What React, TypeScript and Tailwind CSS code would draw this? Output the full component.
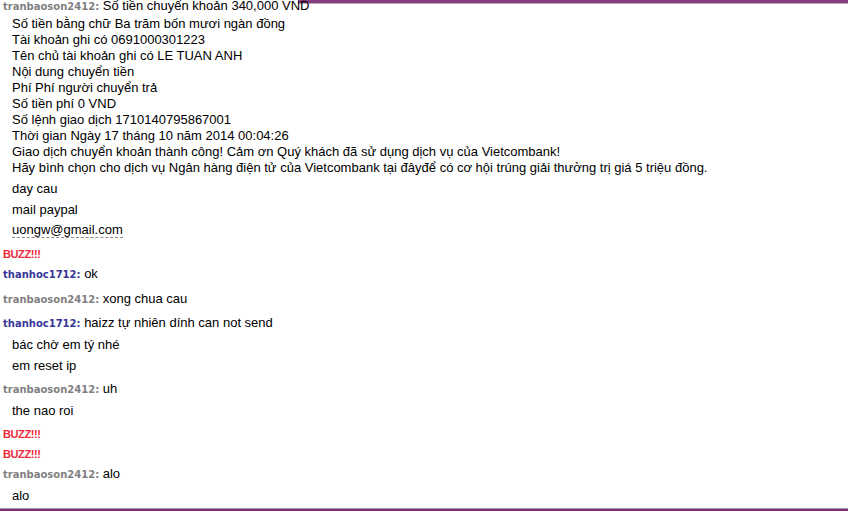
import React from "react";

const Gray = ({ children }: { children: React.ReactNode }) => (
  <span className="font-bold text-[10px] leading-[8px] text-[#7f7f7f] [font-family:'DejaVu_Sans',sans-serif]">
    {children}
  </span>
);

const Blue = ({ children }: { children: React.ReactNode }) => (
  <span className="font-bold text-[10px] leading-[8px] text-[#363699] [font-family:'DejaVu_Sans',sans-serif]">
    {children}
  </span>
);

const Buzz = ({ mt }: { mt: string }) => (
  <div className={`${mt} pl-[3px] h-[16px] leading-[16px]`}>
    <span className="font-bold text-[11px] leading-[8px] tracking-[-0.4px] text-[#f0283a] [font-family:'Liberation_Sans',Arial,sans-serif]">
      BUZZ!!!
    </span>
  </div>
);

export default function App() {
  return (
    <div className="w-[848px] h-[511px] bg-white flex flex-col overflow-hidden relative [font-family:'Liberation_Sans',Arial,sans-serif] text-[13px] text-black">
      <div className="absolute top-0 left-[298px] right-0 h-[3px] bg-[#843f7f]" />
      <div className="absolute top-[3px] left-[298px] right-0 h-[1px] bg-[#b9a3b7]" />
      <div className="flex-1 overflow-hidden relative leading-[16px]">
        <div className="pl-[3px] mt-[-2px] h-[18px] relative">
          <Gray>tranbaoson2412:</Gray> Số tiền chuyển khoản 340,000 VND
        </div>
        <div className="pl-[12px]">
          <div className="h-[16px]">Số tiền bằng chữ Ba trăm bốn mươi ngàn đồng</div>
          <div className="h-[16px]">Tài khoản ghi có 0691000301223</div>
          <div className="h-[16px]">Tên chủ tài khoản ghi có LE TUAN ANH</div>
          <div className="h-[16px]">Nội dung chuyển tiền</div>
          <div className="h-[16px]">Phí Phí người chuyển trả</div>
          <div className="h-[16px]">Số tiền phí 0 VND</div>
          <div className="h-[16px]">Số lệnh giao dịch 1710140795867001</div>
          <div className="h-[16px]">Thời gian Ngày 17 tháng 10 năm 2014 00:04:26</div>
          <div className="h-[16px]">Giao dịch chuyển khoản thành công! Cảm ơn Quý khách đã sử dụng dịch vụ của Vietcombank!</div>
          <div className="h-[16px]">Hãy bình chọn cho dịch vụ Ngân hàng điện tử của Vietcombank tại đâyđể có cơ hội trúng giải thưởng trị giá 5 triệu đồng.</div>
          <div className="mt-[5px] h-[16px]">day cau</div>
          <div className="mt-[5px] h-[16px]">mail paypal</div>
          <div className="mt-[4px] h-[16px]">
            <span className="border-b border-dashed border-[#8a8a8a]">uongw@gmail.com</span>
          </div>
        </div>
        <Buzz mt="mt-[8px]" />
        <div className="mt-[4px] h-[16px] pl-[3px]">
          <Blue>thanhoc1712:</Blue> ok
        </div>
        <div className="mt-[9px] h-[16px] pl-[3px]">
          <Gray>tranbaoson2412:</Gray> xong chua cau
        </div>
        <div className="mt-[8px] h-[16px] pl-[3px]">
          <Blue>thanhoc1712:</Blue> haizz tự nhiên dính can not send
        </div>
        <div className="mt-[6px] h-[16px] pl-[12px]">bác chờ em tý nhé</div>
        <div className="mt-[5px] h-[16px] pl-[12px]">em reset ip</div>
        <div className="mt-[7px] h-[16px] pl-[3px]">
          <Gray>tranbaoson2412:</Gray> uh
        </div>
        <div className="mt-[6px] h-[16px] pl-[12px]">the nao roi</div>
        <Buzz mt="mt-[7px]" />
        <Buzz mt="mt-[4px]" />
        <div className="mt-[4px] h-[16px] pl-[3px]">
          <Gray>tranbaoson2412:</Gray> alo
        </div>
        <div className="mt-[6px] h-[16px] pl-[12px]">alo</div>
      </div>
      <div className="h-[1px] bg-[#a89aa6]" />
      <div className="h-[2px] bg-[#7b2f76]" />
    </div>
  );
}
